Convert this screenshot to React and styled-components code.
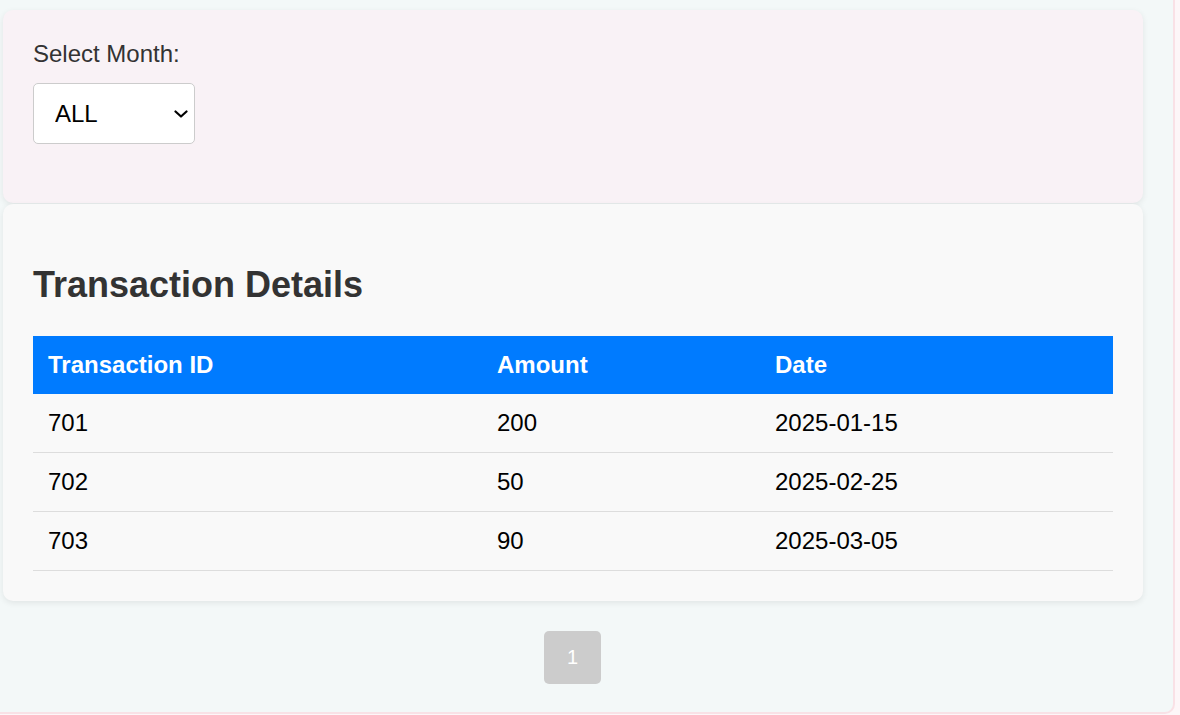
import React, { useState } from 'react'
import styled, { createGlobalStyle } from 'styled-components'

const GlobalStyle = createGlobalStyle`
  html, body {
    margin: 0;
    padding: 0;
    background: #fdf6f8;
    font-family: "Liberation Sans", Arial, sans-serif;
  }
`

const chevron = `url("data:image/svg+xml;utf8,<svg xmlns='http://www.w3.org/2000/svg' width='14' height='8' viewBox='0 0 14 8'><path d='M1.5 1.5 L7 6.5 L12.5 1.5' fill='none' stroke='black' stroke-width='2.2' stroke-linecap='round' stroke-linejoin='round'/></svg>")`

const Page = styled.div`
  width: 1175px;
  height: 714px;
  box-sizing: border-box;
  background: #f3f8f8;
  border-right: 2px solid #f9e1e6;
  border-bottom: 2px solid #f9e1e6;
  border-bottom-right-radius: 10px;
  padding: 10px 0 0 3px;
`

const Column = styled.div`
  width: 1140px;
  display: flex;
  flex-direction: column;
`

const Card = styled.div`
  background: ${p => p.$bg};
  border-radius: 10px;
  box-shadow: 0 2px 6px rgba(0, 0, 0, 0.08);
  padding: 30px;
  box-sizing: border-box;
  height: ${p => p.$h}px;
  margin-bottom: ${p => p.$mb || 0}px;
`

const Label = styled.label`
  display: block;
  font-size: 24px;
  color: #333;
  line-height: 28px;
`

const Select = styled.select`
  display: block;
  margin-top: 15px;
  width: 162px;
  height: 61px;
  font-family: "Liberation Sans", Arial, sans-serif;
  font-size: 24px;
  color: #000;
  background: #fff ${chevron} no-repeat right 6px center;
  appearance: none;
  border: 1px solid #ccc;
  border-radius: 5px;
  padding: 0 10px 0 21px;
  outline: none;
`

const Title = styled.h2`
  font-size: 36px;
  font-weight: bold;
  color: #333;
  margin: 30px 0 30px;
  line-height: 42px;
`

const Table = styled.table`
  width: 100%;
  border-collapse: collapse;
  font-size: 24px;
`

const Th = styled.th`
  background: #007bff;
  color: #fff;
  text-align: left;
  font-weight: bold;
  padding: 0 15px;
  height: 58px;
  width: ${p => p.$w ? p.$w + 'px' : 'auto'};
  box-sizing: border-box;
`

const Td = styled.td`
  color: #000;
  padding: 0 15px;
  height: 58px;
  border-bottom: 1px solid #ddd;
`

const Pager = styled.div`
  display: flex;
  justify-content: center;
  margin-top: 30px;
  padding-right: 1px;
`

const PageButton = styled.button`
  width: 57px;
  height: 53px;
  border: none;
  border-radius: 5px;
  background: #ccc;
  color: #fff;
  font-family: "Liberation Sans", Arial, sans-serif;
  font-size: 20px;
  padding: 0;
`

const rows = [
  { id: 701, amount: 200, date: '2025-01-15' },
  { id: 702, amount: 50, date: '2025-02-25' },
  { id: 703, amount: 90, date: '2025-03-05' },
]

const App = () => {
  const [month, setMonth] = useState('ALL')
  return (
    <>
      <GlobalStyle />
      <Page>
        <Column>
          <Card $bg="#f9f2f6" $h={193} $mb={1}>
            <Label htmlFor="month">Select Month:</Label>
            <Select id="month" value={month} onChange={e => setMonth(e.target.value)}>
              <option>ALL</option>
              <option>January</option>
              <option>February</option>
              <option>March</option>
            </Select>
          </Card>
          <Card $bg="#f9f9f9">
            <Title>Transaction Details</Title>
            <Table>
              <thead>
                <tr>
                  <Th $w={449}>Transaction ID</Th>
                  <Th $w={278}>Amount</Th>
                  <Th>Date</Th>
                </tr>
              </thead>
              <tbody>
                {rows.map(r => (
                  <tr key={r.id}>
                    <Td>{r.id}</Td>
                    <Td>{r.amount}</Td>
                    <Td>{r.date}</Td>
                  </tr>
                ))}
              </tbody>
            </Table>
          </Card>
          <Pager>
            <PageButton>1</PageButton>
          </Pager>
        </Column>
      </Page>
    </>
  )
}

export default App
